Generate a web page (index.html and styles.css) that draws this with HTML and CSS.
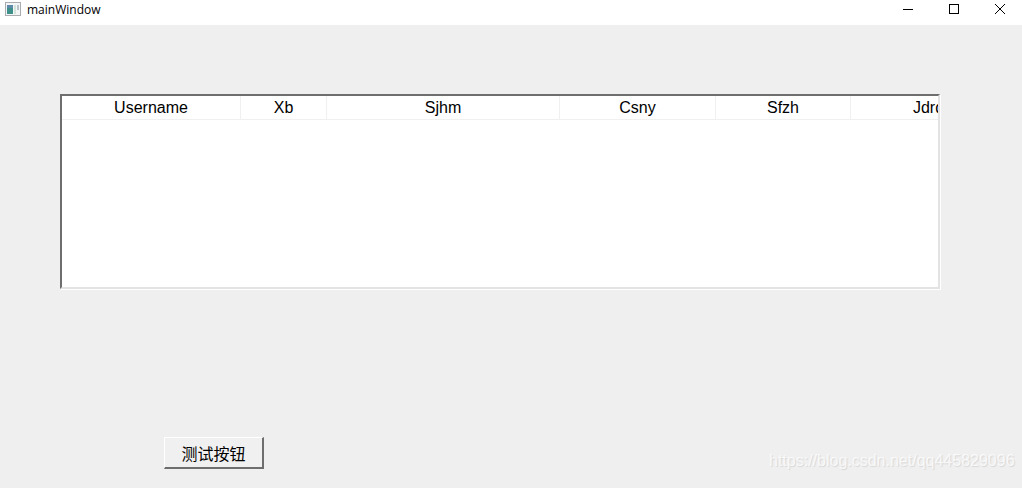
FILE: index.html
```html
<!DOCTYPE html>
<html lang="zh">
<head>
<meta charset="utf-8">
<title>mainWindow</title>
<link rel="stylesheet" href="styles.css">
</head>
<body>
<div class="window">
  <header class="titlebar">
    <svg class="app-icon" width="16" height="14" viewBox="0 0 16 14">
      <rect x="0.5" y="0.5" width="15" height="13" fill="#f4f5f5" stroke="#a9adb0"/>
      <rect x="2" y="3" width="6" height="9" fill="#3f8f8a"/>
      <rect x="2" y="3" width="6" height="3" fill="#5d8aa8"/>
      <rect x="9" y="3" width="2" height="9" fill="#d5e3dd"/>
      <rect x="12" y="3" width="2" height="5" fill="#b8c4cc"/>
    </svg>
    <span class="title">mainWindow</span>
    <div class="controls">
      <svg class="ctl" width="46" height="25" viewBox="0 0 46 25"><path d="M18 9.5H28" stroke="#000" fill="none"/></svg>
      <svg class="ctl" width="46" height="25" viewBox="0 0 46 25"><rect x="18.5" y="4.5" width="9" height="9" stroke="#000" fill="none"/></svg>
      <svg class="ctl" width="46" height="25" viewBox="0 0 46 25"><path d="M18 4L28 14M28 4L18 14" stroke="#000" fill="none"/></svg>
    </div>
  </header>
  <main class="content">
    <section class="table">
      <div class="thead">
        <div class="th c1">Username</div>
        <div class="th c2">Xb</div>
        <div class="th c3">Sjhm</div>
        <div class="th c4">Csny</div>
        <div class="th c5">Sfzh</div>
        <div class="th c6">Jdrq</div>
      </div>
    </section>
    <button class="btn" type="button">测试按钮</button>
    <div class="watermark">https://blog.csdn.net/qq44582909​6</div>
  </main>
</div>
</body>
</html>
```
FILE: styles.css
```css
* { box-sizing: border-box; }
html, body { margin: 0; height: 100%; overflow: hidden; }
.window { width: 1022px; height: 488px; display: flex; flex-direction: column; background: #efefef; }
.titlebar { height: 25px; flex: none; background: #fff; display: flex; align-items: flex-start; padding-left: 5px; }
.app-icon { margin-top: 2px; flex: none; }
.title { margin-left: 6px; margin-top: 1px; font: 12px/18px "Open Sans", "Noto Sans", sans-serif; color: #000; }
.controls { margin-left: auto; display: flex; padding-right: 0; margin-right: -1px; }
.ctl { display: block; flex: none; }
.content { position: relative; flex: 1; display: flex; flex-direction: column; align-items: flex-start; padding: 69px 0 0 60px; }
.table { width: 880px; height: 195px; background: #fff; border-style: solid; border-width: 2px 2px 2px 2px; border-color: #6e6e6e #e3e3e3 #e3e3e3 #6e6e6e; overflow: hidden; box-shadow: 1px 1px 0 #fff; }
.thead { display: flex; height: 24px; border-bottom: 1px solid #f0f0f0; width: 960px; }
.th { flex: none; font: 16px/23px "Liberation Sans", Arial, sans-serif; color: #000; text-align: center; border-right: 1px solid #f0f0f0; }
.c1 { width: 179px; }
.c2 { width: 86px; }
.c3 { width: 233px; }
.c4 { width: 156px; }
.c5 { width: 135px; }
.c6 { width: 155px; border-right: 0; }
.btn { margin: 148px 0 0 104px; width: 100px; height: 32px; padding: 0; background: #f0f0f0; border-style: solid; border-width: 1px 2px 2px 1px; border-color: #fff #6e6e6e #6e6e6e #fff; font: 16px/28px "Noto Sans CJK SC", "Liberation Sans", sans-serif; color: #000; }
.watermark { position: absolute; left: 769px; top: 426px; font: 16px/20px "Liberation Sans", Arial, sans-serif; color: rgba(255,255,255,.75); text-shadow: 1px 1px 1px rgba(0,0,0,.1); white-space: nowrap; }
```
